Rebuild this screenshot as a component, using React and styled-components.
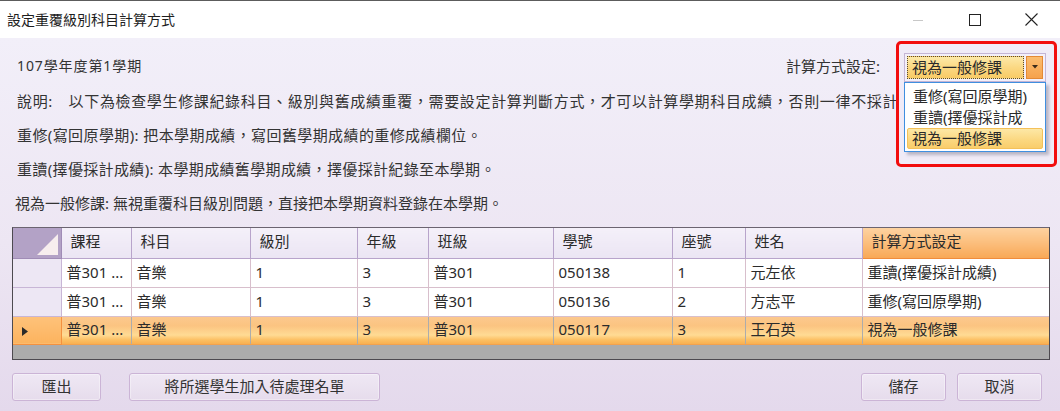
import styled, { createGlobalStyle } from "styled-components"

const FONT = `"Noto Sans", "Noto Sans CJK TC", sans-serif`

const Global = createGlobalStyle`
  html, body {
    margin: 0;
    padding: 0;
    width: 1060px;
    height: 411px;
    overflow: hidden;
    font-family: ${FONT};
  }
  * { box-sizing: border-box; }
`

const Window = styled.div`
  width: 1060px;
  height: 411px;
  display: flex;
  flex-direction: column;
  border-top: 1px solid #5c5c5c;
`

const TitleBar = styled.div`
  height: 37px;
  flex-shrink: 0;
  display: flex;
  align-items: center;
  justify-content: space-between;
  background: #ffffff;
  padding-left: 7px;
`

const Title = styled.span`
  font-size: 14px;
  color: #1e1e1e;
  line-height: 1;
`

const Controls = styled.div`
  display: flex;
  height: 100%;
`

const CtrlBtn = styled.div`
  width: 57px;
  height: 100%;
  display: flex;
  align-items: center;
  justify-content: center;
`

const Body = styled.div`
  flex: 1;
  display: flex;
  flex-direction: column;
  padding: 14px 11px 0 12px;
  background: linear-gradient(to bottom, #f2eff9 0%, #ede6f3 55%, #e4d9ec 100%);
  color: #333;
`

const TopRow = styled.div`
  display: flex;
  align-items: center;
  justify-content: space-between;
  height: 30px;
  padding-left: 5px;
  position: relative;
  z-index: 2;
`

const Semester = styled.span`
  font-size: 14px;
  letter-spacing: 0.9px;
  line-height: 1;
  margin-top: -3px;
`

const Setting = styled.div`
  display: flex;
  align-items: center;
  gap: 24px;
  margin-right: 3px;
`

const SettingLabel = styled.span`
  font-size: 15px;
  line-height: 1;
  margin-top: -2px;
`

const ComboWrap = styled.div`
  position: relative;
  width: 142px;
  height: 29px;
`

const Highlight = styled.div`
  position: absolute;
  left: -8px;
  top: -12px;
  right: -11px;
  height: 126px;
  border: 3px solid #f20d0d;
  border-radius: 5px;
  background: #f0ebf7;
`

const Combo = styled.div`
  position: relative;
  display: flex;
  align-items: stretch;
  gap: 2px;
  height: 100%;
  padding: 2px;
  border: 1px solid #c4b5d4;
  background: #f4eff8;
`

const ComboField = styled.div`
  flex: 1;
  display: flex;
  align-items: center;
  padding-left: 4px;
  font-size: 15px;
  line-height: 1;
  color: #2a2a2a;
  background: linear-gradient(to bottom, #fde9a8 0%, #fbd883 50%, #f8cb66 100%);
  border: 1px dotted #5a4a30;
`

const ComboButton = styled.div`
  width: 17px;
  display: flex;
  align-items: center;
  justify-content: center;
  background: linear-gradient(to bottom, #fbbd70 0%, #f6a24c 100%);
  border: 1px solid #e48a35;
`

const DropList = styled.div`
  position: absolute;
  left: 0;
  top: 29px;
  width: 142px;
  padding: 3px 2px 2px;
  background: #ffffff;
  border: 1px solid #3f8fe0;
  box-shadow: 3px 3px 3px rgba(80, 80, 100, 0.35);
  display: flex;
  flex-direction: column;
`

const DropItem = styled.div`
  height: 21px;
  display: flex;
  align-items: center;
  padding-left: ${({ $active }) => ($active ? "4px" : "5px")};
  font-size: 15px;
  line-height: 1;
  color: #2a2a2a;
  white-space: nowrap;
  border-radius: 2px;
  border: 1px solid ${({ $active }) => ($active ? "#f4c15a" : "transparent")};
  background: ${({ $active }) =>
    $active ? "linear-gradient(to bottom, #fde8a6 0%, #fbd77f 60%, #f9cd6b 100%)" : "transparent"};
`

const Line = styled.div`
  height: 34px;
  display: flex;
  align-items: center;
  padding-left: ${({ $indent }) => $indent ?? 5}px;
  font-size: 15px;
  letter-spacing: ${({ $spacing }) => $spacing ?? 0}px;
  line-height: 1;
  white-space: nowrap;
  margin-top: ${({ $first }) => ($first ? "2px" : "0")};
`

const GridFrame = styled.div`
  margin-top: 7px;
  width: 1038px;
  height: 133px;
  flex-shrink: 0;
  border: 1px solid #4d4a50;
  border-top-color: #6b6470;
  background: #acacac;
  overflow: hidden;
`

const Table = styled.table`
  border-collapse: collapse;
  table-layout: fixed;
  width: 1036px;
  font-size: 15px;
  color: #2b2b2b;
`

const HeadRow = styled.tr`
  height: 30px;
`

const Th = styled.th`
  font-weight: normal;
  text-align: left;
  padding: 0 0 2px 9px;
  line-height: 1;
  white-space: nowrap;
  border-right: 1px solid ${({ $hot }) => ($hot ? "#f08c3c" : "#b8a4cb")};
  border-bottom: 1px solid ${({ $hot }) => ($hot ? "#f08c3c" : "#b8a4cb")};
  background: ${({ $hot }) =>
    $hot
      ? "linear-gradient(to bottom, #fdd2a0 0%, #fbbe7c 50%, #f8a857 100%)"
      : "linear-gradient(to bottom, #f4f0f9 0%, #ebe5f3 100%)"};
`

const Corner = styled.th`
  position: relative;
  padding: 0;
  background: #b3a2c6;
  border-right: 1px solid #a08cb6;
  border-bottom: 1px solid #a08cb6;
`

const CornerTri = styled.svg`
  position: absolute;
  right: 3px;
  bottom: 3px;
`

const Row = styled.tr`
  height: ${({ $h }) => $h}px;
  background: ${({ $selected }) =>
    $selected
      ? "linear-gradient(to bottom, #fcc98f 0%, #fbc481 35%, #ffdb94 68%, #fcc064 85%, #f9b051 100%)"
      : "#ffffff"};
`

const RowHead = styled.td`
  padding: 0 0 0 9px;
  background: ${({ $selected }) =>
    $selected ? "linear-gradient(to bottom, #fec27a 0%, #fcb35e 100%)" : "#ede7f4"};
  border-right: 1px solid ${({ $selected }) => ($selected ? "#f4913f" : "#c8b6d6")};
  border-bottom: 1px solid ${({ $selected }) => ($selected ? "#f4913f" : "#c8b6d6")};
  border-top: ${({ $selected }) => ($selected ? "1px solid #f4913f" : "none")};
`

const Td = styled.td`
  padding: 0 0 1px 5px;
  line-height: 1;
  white-space: nowrap;
  overflow: hidden;
  background: transparent;
  border-right: 1px solid ${({ $selected }) => ($selected ? "transparent" : "#d8bfcc")};
  border-bottom: 1px solid ${({ $selected }) => ($selected ? "#f3a24e" : "#d8bfcc")};
  border-top: ${({ $selected }) => ($selected ? "1px solid #f7b46a" : "none")};
`

const ButtonBar = styled.div`
  margin-top: 13px;
  display: flex;
  justify-content: space-between;
  padding-right: 7px;
`

const ButtonGroup = styled.div`
  display: flex;
  gap: ${({ $gap }) => $gap}px;
`

const Button = styled.button`
  width: ${({ $w }) => $w}px;
  height: 28px;
  padding: 0 0 2px;
  font-family: ${FONT};
  font-size: 15px;
  line-height: 1;
  color: #333;
  background: linear-gradient(to bottom, #efe8f4 0%, #e6dcec 100%);
  border: 1px solid #cbb4d6;
  border-radius: 3px;
  box-shadow: inset 0 0 0 1px rgba(255, 255, 255, 0.35);
`

const colWidths = [48, 70, 119, 107, 71, 125, 119, 73, 117, 187]
const headers = ["課程", "科目", "級別", "年級", "班級", "學號", "座號", "姓名", "計算方式設定"]

const rows = [
  { h: 29, cells: ["普301 ...", "音樂", "1", "3", "普301", "050138", "1", "元左依", "重讀(擇優採計成績)"] },
  { h: 29, cells: ["普301 ...", "音樂", "1", "3", "普301", "050136", "2", "方志平", "重修(寫回原學期)"] },
  { h: 28, selected: true, cells: ["普301 ...", "音樂", "1", "3", "普301", "050117", "3", "王石英", "視為一般修課"] },
]

export default function App() {
  return (
    <>
      <Global />
      <Window>
        <TitleBar>
          <Title>設定重覆級別科目計算方式</Title>
          <Controls>
            <CtrlBtn>
              <svg width="12" height="12" viewBox="0 0 12 12">
                <line x1="1" y1="6.5" x2="11" y2="6.5" stroke="#c8c8c8" strokeWidth="1" />
              </svg>
            </CtrlBtn>
            <CtrlBtn>
              <svg width="12" height="12" viewBox="0 0 12 12">
                <rect x="0.5" y="0.5" width="11" height="11" fill="none" stroke="#222" strokeWidth="1" />
              </svg>
            </CtrlBtn>
            <CtrlBtn>
              <svg width="13" height="13" viewBox="0 0 13 13">
                <path d="M0.5 0.5 L12.5 12.5 M12.5 0.5 L0.5 12.5" stroke="#222" strokeWidth="1.1" />
              </svg>
            </CtrlBtn>
          </Controls>
        </TitleBar>

        <Body>
          <TopRow>
            <Semester>107學年度第1學期</Semester>
            <Setting>
              <SettingLabel>計算方式設定:</SettingLabel>
              <ComboWrap>
                <Highlight />
                <Combo>
                  <ComboField>視為一般修課</ComboField>
                  <ComboButton>
                    <svg width="6" height="4" viewBox="0 0 6 4">
                      <path d="M0 0 L6 0 L3 3.5 Z" fill="#3a2a1a" />
                    </svg>
                  </ComboButton>
                </Combo>
                <DropList>
                  <DropItem>重修(寫回原學期)</DropItem>
                  <DropItem>重讀(擇優採計成</DropItem>
                  <DropItem $active>視為一般修課</DropItem>
                </DropList>
              </ComboWrap>
            </Setting>
          </TopRow>

          <Line $first $spacing={0.65}>
            說明:　以下為檢查學生修課紀錄科目、級別與舊成績重覆，需要設定計算判斷方式，才可以計算學期科目成績，否則一律不採計
          </Line>
          <Line $spacing={0.4}>重修(寫回原學期): 把本學期成績，寫回舊學期成績的重修成績欄位。</Line>
          <Line $spacing={0.35}>重讀(擇優採計成績): 本學期成績舊學期成績，擇優採計紀錄至本學期。</Line>
          <Line $indent={3}>視為一般修課: 無視重覆科目級別問題，直接把本學期資料登錄在本學期。</Line>

          <GridFrame>
            <Table>
              <colgroup>
                {colWidths.map((w, i) => (
                  <col key={i} style={{ width: w }} />
                ))}
              </colgroup>
              <thead>
                <HeadRow>
                  <Corner>
                    <CornerTri width="21" height="21" viewBox="0 0 21 21">
                      <path d="M21 0 L21 21 L0 21 Z" fill="#f7eeee" />
                    </CornerTri>
                  </Corner>
                  {headers.map((h, i) => (
                    <Th key={h} $hot={i === headers.length - 1}>
                      {h}
                    </Th>
                  ))}
                </HeadRow>
              </thead>
              <tbody>
                {rows.map((r, ri) => (
                  <Row key={ri} $h={r.h} $selected={r.selected}>
                    <RowHead $selected={r.selected}>
                      {r.selected && (
                        <svg width="6" height="9" viewBox="0 0 6 9">
                          <path d="M0 0 L6 4.5 L0 9 Z" fill="#2a2a2a" />
                        </svg>
                      )}
                    </RowHead>
                    {r.cells.map((c, ci) => (
                      <Td key={ci} $selected={r.selected}>
                        {c}
                      </Td>
                    ))}
                  </Row>
                ))}
              </tbody>
            </Table>
          </GridFrame>

          <ButtonBar>
            <ButtonGroup $gap={28}>
              <Button $w={89}>匯出</Button>
              <Button $w={251}>將所選學生加入待處理名單</Button>
            </ButtonGroup>
            <ButtonGroup $gap={11}>
              <Button $w={85}>儲存</Button>
              <Button $w={85}>取消</Button>
            </ButtonGroup>
          </ButtonBar>
        </Body>
      </Window>
    </>
  )
}
